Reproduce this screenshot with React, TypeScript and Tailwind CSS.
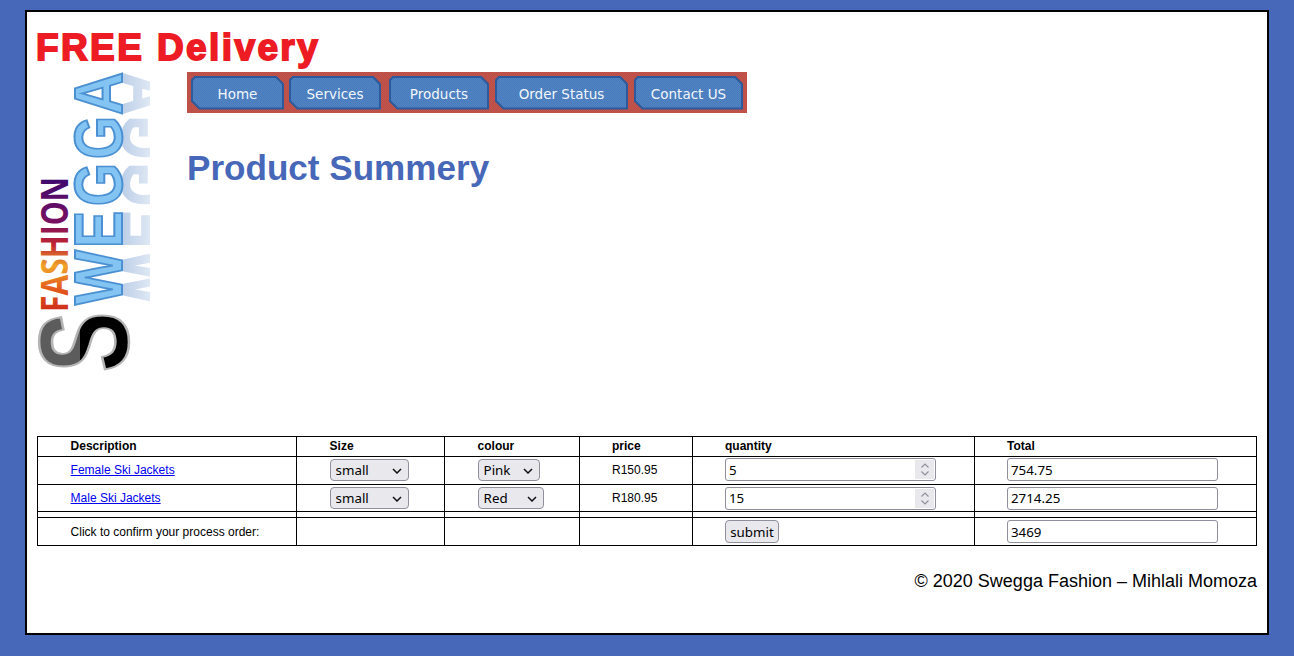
import React from "react";

const sans = "font-['Liberation_Sans',Arial,sans-serif]";

function Logo() {
  const letters = [
    { c: "W", y: 305, l: 55 },
    { c: "E", y: 248, l: 37 },
    { c: "G", y: 206, l: 43 },
    { c: "G", y: 159, l: 43 },
    { c: "A", y: 115, l: 43 },
  ];
  const ff = "Liberation Sans, sans-serif";
  return (
    <svg width="120" height="302" viewBox="36 70 120 302" className="block shrink-0 -mt-[2px]">
      <defs>
        <linearGradient id="fashion" x1="0" y1="0" x2="1" y2="0">
          <stop offset="0" stopColor="#cc2a18" />
          <stop offset="0.16" stopColor="#e2561c" />
          <stop offset="0.34" stopColor="#f0a42a" />
          <stop offset="0.5" stopColor="#c02430" />
          <stop offset="0.66" stopColor="#7a1060" />
          <stop offset="1" stopColor="#3c0a6e" />
        </linearGradient>
        <linearGradient id="fade" gradientUnits="userSpaceOnUse" x1="122" y1="0" x2="152" y2="0">
          <stop offset="0" stopColor="white" stopOpacity="1" />
          <stop offset="1" stopColor="white" stopOpacity="0.45" />
        </linearGradient>
        <mask id="reflect" maskUnits="userSpaceOnUse" x="122" y="70" width="28" height="240">
          <rect x="122" y="70" width="28" height="240" fill="url(#fade)" />
        </mask>
        <clipPath id="sLeft"><rect x="36" y="310" width="44" height="64" /></clipPath>
        <clipPath id="sRight"><rect x="80" y="310" width="52" height="64" /></clipPath>
      </defs>

      <g mask="url(#reflect)">
        {letters.map((o, i) => (
          <text key={i} transform={`translate(122 ${o.y}) scale(-1 1) rotate(-90)`} fontFamily={ff} fontWeight="700" fontSize="68" textLength={o.l} lengthAdjust="spacingAndGlyphs" fill="#bccfe8" stroke="#bccfe8" strokeWidth="1.5">{o.c}</text>
        ))}
      </g>
      {letters.map((o, i) => (
        <text key={i} transform={`translate(122 ${o.y}) rotate(-90)`} fontFamily={ff} fontWeight="700" fontSize="68" textLength={o.l} lengthAdjust="spacingAndGlyphs" fill="#84c4f2" stroke="#4a90d2" strokeWidth="2">{o.c}</text>
      ))}

      <text transform="translate(68 312) rotate(-90)" fontFamily="Open Sans, sans-serif" fontWeight="700" fontSize="38" textLength="135" lengthAdjust="spacingAndGlyphs" fill="url(#fashion)">FASHION</text>

      <g clipPath="url(#sLeft)">
        <text transform="translate(128 372) rotate(-90) scale(0.9 1.26)" fontFamily={ff} fontWeight="700" fontSize="100" fill="#5c5c5c" stroke="#b5b5b5" strokeWidth="2">S</text>
      </g>
      <g clipPath="url(#sRight)">
        <text transform="translate(128 372) rotate(-90) scale(0.9 1.26)" fontFamily={ff} fontWeight="700" fontSize="100" fill="#000000" stroke="#b5b5b5" strokeWidth="2">S</text>
      </g>
    </svg>
  );
}

function NavButton({ label, className }: { label: string; className: string }) {
  return (
    <div className={`h-[34px] bg-[#2c5a9c] [clip-path:polygon(4px_0,calc(100%-8px)_0,100%_8px,100%_100%,8px_100%,0_calc(100%-8px),0_4px)] p-[2px] ${className}`}>
      <div className="h-full flex items-center justify-center pt-[4px] bg-[repeating-conic-gradient(#4279c2_0_25%,#5686bc_0_50%)] bg-[length:2px_2px] [clip-path:polygon(3px_0,calc(100%-7px)_0,100%_7px,100%_100%,7px_100%,0_calc(100%-7px),0_3px)] text-[13.5px] text-[#f2f6fb] font-['DejaVu_Sans',sans-serif]">
        {label}
      </div>
    </div>
  );
}

function Select({ value, width }: { value: string; width: string }) {
  return (
    <div className={`relative ${width}`}>
      <select
        defaultValue={value}
        className="appearance-none w-full h-[22px] bg-[#e9e9ed] border border-[#8f8f9d] rounded-[4px] text-[13.33px] text-black font-['Noto_Sans',sans-serif] pl-[5px] block"
      >
        <option>{value}</option>
      </select>
      <svg width="10" height="6" viewBox="0 0 10 6" className="absolute right-[7px] top-[9px] pointer-events-none">
        <path d="M1 1l4 4 4-4" fill="none" stroke="#111" strokeWidth="1.5" />
      </svg>
    </div>
  );
}

const inputCls = "h-[23px] w-[211px] bg-white border border-[#8f8f9d] rounded-[3px] text-[13.33px] text-black font-['Noto_Sans',sans-serif] px-[3px] block outline-none";

function NumberInput({ value }: { value: number }) {
  return (
    <div className="relative w-[211px]">
      <input
        type="number"
        defaultValue={value}
        className={`${inputCls} [appearance:textfield] [&::-webkit-inner-spin-button]:appearance-none`}
      />
      <div className="absolute right-[2px] top-[2px] w-[19px] h-[19px] bg-[#e9e9ed] flex items-center justify-center pointer-events-none">
        <svg width="10" height="13" viewBox="0 0 10 13">
          <path d="M1.5 4.5L5 1l3.5 3.5M1.5 8.5L5 12l3.5-3.5" fill="none" stroke="#8f8f9d" strokeWidth="1.2" />
        </svg>
      </div>
    </div>
  );
}

const cell = "border border-black pl-[32.6px] pr-0 pt-0 pb-[2px] align-middle text-left";
const cellB = "border border-black pl-[32px] pr-0 pt-0 pb-[2px] align-middle text-left";
const cell0 = "border border-black pl-[32.6px] p-0 align-middle text-left";
const cellB0 = "border border-black pl-[32px] p-0 align-middle text-left";
const empty = "border border-black p-0";

export default function App() {
  return (
    <div className={`min-h-screen bg-[#4767b8] pt-[10px] px-[25px] ${sans}`}>
      <div className="h-[625px] bg-white border-2 border-black pl-[10px] pr-[10px] pt-[12px]">
        <div className="h-[48px] -ml-[1px] text-[37px] leading-[48px] font-bold text-[#ed1c24] [-webkit-text-stroke:1.8px_#ed1c24] tracking-[2.4px]">
          FREE Delivery
        </div>

        <div className="flex h-[364px]">
          <div className="-ml-[1px]"><Logo /></div>
          <div className="ml-[31px]">
            <nav className="flex items-center w-[560px] h-[41px] px-[4px] bg-[repeating-conic-gradient(#c44a44_0_25%,#b8584e_0_50%)] bg-[length:2px_2px]">
              <NavButton label="Home" className="w-[93px]" />
              <NavButton label="Services" className="w-[92px] ml-[5px]" />
              <NavButton label="Products" className="w-[100px] ml-[8px]" />
              <NavButton label="Order Status" className="w-[133px] ml-[6px]" />
              <NavButton label="Contact US" className="w-[109px] ml-[6px]" />
            </nav>
            <h1 className="mt-[33px] text-[35.1px] leading-[44px] font-bold text-[#4767b8]">Product Summery</h1>
          </div>
        </div>

        <table className="w-[1219px] table-fixed border-collapse text-[12px] leading-[16px] text-black">
          <colgroup>
            <col className="w-[259px]" />
            <col className="w-[148px]" />
            <col className="w-[135px]" />
            <col className="w-[113px]" />
            <col className="w-[282px]" />
            <col className="w-[282px]" />
          </colgroup>
          <tbody>
            <tr className="h-[20px] font-bold">
              <td className={cell}>Description</td>
              <td className={cell}>Size</td>
              <td className={cell}>colour</td>
              <td className={cellB}>price</td>
              <td className={cellB}>quantity</td>
              <td className={cellB}>Total</td>
            </tr>
            <tr className="h-[28px]">
              <td className={cell}><a href="#" className="text-[#0000ee] underline">Female Ski Jackets</a></td>
              <td className={cell}><Select value="small" width="w-[79px]" /></td>
              <td className={cell}><Select value="Pink" width="w-[62px]" /></td>
              <td className={cellB}>R150.95</td>
              <td className={cellB}><NumberInput value={5} /></td>
              <td className={cellB}><input type="text" className={inputCls} defaultValue="754.75" /></td>
            </tr>
            <tr className="h-[27px]">
              <td className={cell0}><a href="#" className="text-[#0000ee] underline">Male Ski Jackets</a></td>
              <td className={cell0}><Select value="small" width="w-[79px]" /></td>
              <td className={cell0}><Select value="Red" width="w-[66px]" /></td>
              <td className={cellB0}>R180.95</td>
              <td className={cellB0}><NumberInput value={15} /></td>
              <td className={cellB0}><input type="text" className={inputCls} defaultValue="2714.25" /></td>
            </tr>
            <tr className="h-[6px]">
              <td className={empty}></td><td className={empty}></td><td className={empty}></td><td className={empty}></td><td className={empty}></td><td className={empty}></td>
            </tr>
            <tr className="h-[28px]">
              <td className={cell0}>Click to confirm your process order:</td>
              <td className={empty}></td>
              <td className={empty}></td>
              <td className={empty}></td>
              <td className={cellB0}>
                <button type="button" className="h-[23px] w-[54px] bg-[#e9e9ed] border border-[#8f8f9d] rounded-[4px] text-[13.33px] text-black font-['Noto_Sans',sans-serif] pt-[1px] block">submit</button>
              </td>
              <td className={cellB0}><input type="text" className={inputCls} defaultValue="3469" /></td>
            </tr>
          </tbody>
        </table>

        <p className="mt-[25px] w-[1220px] text-right text-[18px] leading-[21px] text-black">© 2020 Swegga Fashion – Mihlali Momoza</p>
      </div>
    </div>
  );
}
